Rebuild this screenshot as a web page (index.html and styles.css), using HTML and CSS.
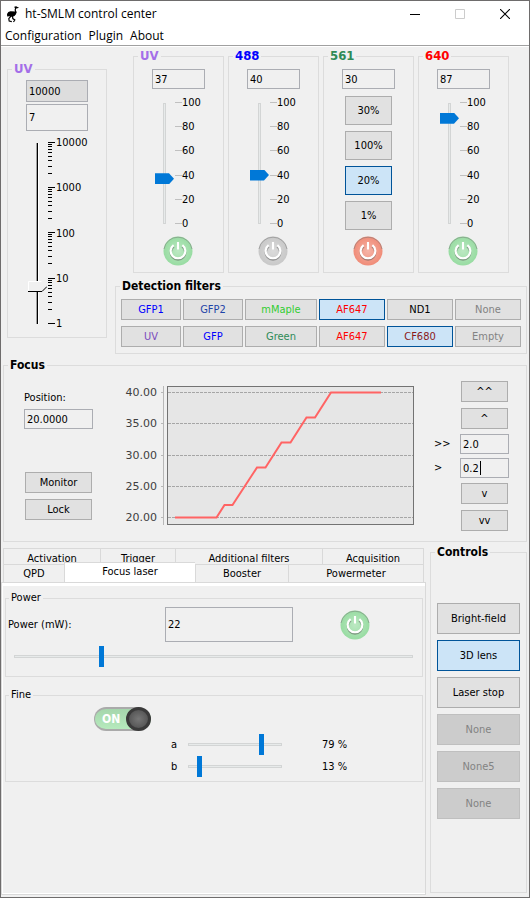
FILE: index.html
```
<!DOCTYPE html>
<html lang="en">
<head>
<meta charset="utf-8">
<title>ht-SMLM control center</title>
<meta name="viewport" content="width=device-width, initial-scale=1">
<link rel="stylesheet" href="styles.css">
</head>
<body>
<svg class="defs" aria-hidden="true">
  <defs>
    <symbol id="power" viewBox="0 0 30 30">
      <circle cx="15" cy="15" r="14.5" fill="currentColor"/>
      <circle cx="15" cy="15" r="14.5" fill="url(#shine)"/>
      <path d="M1 13A14.2 14.2 0 0 1 29 13" fill="none" stroke="#777" stroke-opacity=".5"/>
      <path d="M10.800 10.700A7.200 7.200 0 1 0 19.200 10.700" fill="none" stroke="#555" stroke-opacity=".5" stroke-width="2.2"/>
      <path d="M10.600 9.200A7.300 7.300 0 1 0 19.400 9.200M15 6V13.500" fill="none" stroke="#fff" stroke-width="2.1"/>
    </symbol>
    <radialGradient id="shine"><stop offset="0" stop-color="#fff" stop-opacity=".35"/><stop offset="1" stop-color="#fff" stop-opacity="0"/></radialGradient>
  </defs>
</svg>
<div class="window">
  <header class="titlebar">
    <svg class="logo" viewBox="0 0 18 20" aria-hidden="true"><path d="M10.500 3.400 12 2.800 13.500 3.600 11.600 4.200 11.200 6 12 9M8.500 12 8.800 14.600 10.800 16 9.500 18M7 12 4.800 14.600 5.200 17 7.800 17.600" fill="none" stroke="#000" stroke-width="1.200"/><path d="M3 10Q4 7 6.800 7.200L11.200 7.600 12.400 7.400Q12.800 10.500 10.500 12 8 13.500 5.500 12.300L3.200 12.600Z"/></svg>
    <h1>ht-SMLM control center</h1>
    <div class="winbuttons">
      <button type="button" aria-label="Minimize"><svg viewBox="0 0 10 10"><path d="M0 5.5H10" stroke="#000"/></svg></button>
      <button type="button" aria-label="Maximize" disabled><svg viewBox="0 0 10 10"><path d="M.5 .5H9.5V9.5H.5Z" fill="none" stroke="#ccc"/></svg></button>
      <button type="button" aria-label="Close"><svg viewBox="0 0 10 10"><path d="M0 0 10 10M10 0 0 10" stroke="#000" stroke-width="1.1"/></svg></button>
    </div>
  </header>
  <nav class="menubar"><button type="button">Configuration</button><button type="button">Plugin</button><button type="button">About</button></nav>

  <main>
    <div class="top">
      <fieldset class="pulse violet">
        <legend>UV</legend>
        <input class="max" type="text" value="10000" aria-label="UV maximum">
        <input class="now" type="text" value="7" aria-label="UV pulse">
        <div class="scale log">
          <input class="vslider classic" type="range" min="0" max="4" step="0.005" value="0.82" aria-label="UV pulse level">
          <svg class="logticks" viewBox="0 0 7 182" aria-hidden="true"><path d="M0 .5H7M0 2.5H4M0 4.5H4M0 7.5H4M0 10.5H4M0 14.5H4M0 18.5H4M0 24.5H4M0 31.5H4M0 45.5H7M0 47.5H4M0 49.5H4M0 52.5H4M0 55.5H4M0 59.5H4M0 63.5H4M0 69.5H4M0 76.5H4M0 90.5H7M0 92.5H4M0 94.5H4M0 97.5H4M0 100.5H4M0 104.5H4M0 108.5H4M0 114.5H4M0 121.5H4M0 136.5H7M0 138.5H4M0 140.5H4M0 143.5H4M0 146.5H4M0 150.5H4M0 154.5H4M0 160.5H4M0 167.5H4M0 181.5H7" stroke="#000"/></svg>
          <div class="marks"><span>10000</span><span>1000</span><span>100</span><span>10</span><span>1</span></div>
        </div>
      </fieldset>

      <div class="optics">
        <div class="lasers">
          <fieldset class="laser violet">
            <legend>UV</legend>
            <input type="text" value="37" aria-label="UV power">
            <div class="scale"><input class="vslider" type="range" value="37" aria-label="UV power level"><div class="marks ticked"><span>100</span><span>80</span><span>60</span><span>40</span><span>20</span><span>0</span></div></div>
            <button class="power on" type="button" aria-label="UV on"><svg><use href="#power"/></svg></button>
          </fieldset>
          <fieldset class="laser blue">
            <legend>488</legend>
            <input type="text" value="40" aria-label="488 power">
            <div class="scale"><input class="vslider" type="range" value="40" aria-label="488 power level"><div class="marks ticked"><span>100</span><span>80</span><span>60</span><span>40</span><span>20</span><span>0</span></div></div>
            <button class="power off" type="button" aria-label="488 off"><svg><use href="#power"/></svg></button>
          </fieldset>
          <fieldset class="laser green">
            <legend>561</legend>
            <input type="text" value="30" aria-label="561 power">
            <div class="presets"><button type="button">30%</button><button type="button">100%</button><button type="button" class="active">20%</button><button type="button">1%</button></div>
            <button class="power fault" type="button" aria-label="561 power switch"><svg><use href="#power"/></svg></button>
          </fieldset>
          <fieldset class="laser red">
            <legend>640</legend>
            <input type="text" value="87" aria-label="640 power">
            <div class="scale"><input class="vslider" type="range" value="87" aria-label="640 power level"><div class="marks ticked"><span>100</span><span>80</span><span>60</span><span>40</span><span>20</span><span>0</span></div></div>
            <button class="power on" type="button" aria-label="640 on"><svg><use href="#power"/></svg></button>
          </fieldset>
        </div>
        <fieldset class="filters">
          <legend>Detection filters</legend>
          <div class="filtergrid">
            <button type="button" class="c-blue">GFP1</button><button type="button" class="c-navy">GFP2</button><button type="button" class="c-lime">mMaple</button><button type="button" class="c-red active">AF647</button><button type="button">ND1</button><button type="button" class="c-gray">None</button>
            <button type="button" class="c-violet">UV</button><button type="button" class="c-blue">GFP</button><button type="button" class="c-green">Green</button><button type="button" class="c-red">AF647</button><button type="button" class="c-maroon active">CF680</button><button type="button" class="c-gray">Empty</button>
          </div>
        </fieldset>
      </div>
    </div>

    <fieldset class="focus">
      <legend>Focus</legend>
      <div class="focusbody">
        <div class="position">
          <label for="pos">Position:</label>
          <input id="pos" type="text" value="20.0000">
          <div class="posbuttons"><button type="button">Monitor</button><button type="button">Lock</button></div>
        </div>
        <svg class="chart" viewBox="0 0 296 146" role="img" aria-label="Focus position over time">
          <rect x="47.5" y="4.5" width="246" height="138" fill="#e6e6e6" stroke="#737373"/>
          <path d="M48 10.5H293M48 41.5H293M48 73.5H293M48 104.5H293M48 135.5H293" stroke="#a6a6a6" stroke-dasharray="3 1"/>
          <path d="M43.5 4V143M41 10.5H44M41 41.5H44M41 73.5H44M41 104.5H44M41 135.5H44" stroke="#b8b8b8"/>
          <path d="M55 135.5H96.5L104.5 123H112.5L137 85.500H145.5L161.500 60.500H170.500L186.500 35.500H195L211 10.500H261" fill="none" stroke="#ff6464" stroke-width="2"/>
          <g class="axis"><text x="37" y="14">40.00</text><text x="37" y="45">35.00</text><text x="37" y="77">30.00</text><text x="37" y="108">25.00</text><text x="37" y="139">20.00</text></g>
        </svg>
        <div class="steps">
          <div class="pair"><button type="button">^^</button><button type="button">^</button></div>
          <div class="stepfields">
            <label for="big">&gt;&gt;</label><input id="big" type="text" value="2.0">
            <label for="small">&gt;</label><div class="caretfield"><input id="small" type="text" value="0.2"><i class="caret"></i></div>
          </div>
          <div class="pair"><button type="button">v</button><button type="button">vv</button></div>
        </div>
      </div>
    </fieldset>

    <div class="bottom">
      <section class="tabs">
        <div class="tabrows" role="tablist">
          <div class="tabrow back"><button type="button" role="tab">Activation</button><button type="button" role="tab">Trigger</button><button type="button" role="tab">Additional filters</button><button type="button" role="tab">Acquisition</button></div>
          <div class="tabrow front"><button type="button" role="tab">QPD</button><button type="button" role="tab" aria-selected="true">Focus laser</button><button type="button" role="tab">Booster</button><button type="button" role="tab">Powermeter</button></div>
        </div>
        <div class="pane" role="tabpanel">
          <fieldset class="plain">
            <legend>Power</legend>
            <div class="powerrow">
              <label for="mw">Power (mW):</label>
              <input id="mw" type="text" value="22">
              <button class="power on" type="button" aria-label="Focus laser on"><svg><use href="#power"/></svg></button>
            </div>
            <input class="hslider wide" type="range" value="22" aria-label="Power level">
          </fieldset>
          <fieldset class="plain fine">
            <legend>Fine</legend>
            <label class="switch"><span>ON</span><input type="checkbox" checked></label>
            <div class="finerow"><label for="fa">a</label><input id="fa" class="hslider" type="range" value="79"><output for="fa">79 %</output></div>
            <div class="finerow"><label for="fb">b</label><input id="fb" class="hslider" type="range" value="13"><output for="fb">13 %</output></div>
          </fieldset>
        </div>
      </section>
      <fieldset class="controls">
        <legend>Controls</legend>
        <div class="controllist"><button type="button">Bright-field</button><button type="button" class="active">3D lens</button><button type="button">Laser stop</button><button type="button" disabled>None</button><button type="button" disabled>None5</button><button type="button" disabled>None</button></div>
      </fieldset>
    </div>
  </main>
</div>
</body>
</html>
```
FILE: styles.css
```
* { box-sizing: border-box; }
body { margin: 0; background: #f0f0f0; color: #000; font: 11px/14px Tahoma, "DejaVu Sans Condensed", "Noto Sans", sans-serif; }
button, input { font: inherit; color: inherit; margin: 0; min-width: 0; }
.defs { position: absolute; width: 0; height: 0; }
.window { min-height: 100vh; display: flex; flex-direction: column; border: 1px solid #6e6c6c; }

.titlebar { display: flex; align-items: center; height: 25px; background: #fff; padding-left: 3px; }
.logo { width: 18px; height: 20px; }
h1 { flex: 1; margin: 0 0 0 3px; font: 12px/16px "Segoe UI", "Open Sans", sans-serif; }
.winbuttons { display: flex; padding-right: 2px; }
.winbuttons button { width: 45px; height: 24px; padding: 0; border: 0; background: none; display: grid; place-items: center; }
.winbuttons svg { width: 10px; height: 10px; }
.menubar { display: flex; gap: 7px; height: 20px; padding: 0 4px; background: #fff; border-bottom: 1px solid #a0a0a0; box-shadow: 0 1px #fff; }
.menubar button { border: 0; padding: 0; background: none; font: 12px/16px "Segoe UI", "Open Sans", sans-serif; }

main { flex: 1; display: flex; flex-direction: column; padding: 3px 2px 2px 0; }
fieldset { margin: 0; min-width: 0; border: 1px solid #dcdcdc; padding: 0; }
legend { margin-left: 4px; padding: 0 2px; font-size: 12px; line-height: 14px; font-weight: bold; }
.pulse legend, .laser legend { margin-left: -14px; font-size: 13px; }
.violet legend { color: #a36ee8; }
.blue legend { color: #00f; }
.green legend { color: #2e8b57; }
.red legend { color: #f00; }
input[type="text"] { display: block; width: 100%; height: 20px; padding: 0 2px; border: 1px solid #abadb3; border-radius: 0; background: #f0f0f0; outline: 0; }

.presets button, .filters button, .focus button, .controls button { padding: 0; border: 1px solid #adadad; background: #e1e1e1; height: 21px; }
.presets button.active, .filters button.active, .controls button.active { background: #cce4f7; border-color: #005499; }
.controls button:disabled { background: #ccc; border-color: #bfbfbf; color: #838383; }

.top { display: flex; gap: 8px; padding-left: 6px; }
.pulse { width: 100px; margin: 13px 0 0; padding: 4px 18px 8px; align-self: flex-start; }
.pulse .max { height: 22px; background: #ddd; }
.pulse .now { height: 27px; margin-top: 2px; }
.pulse .log { height: 192px; margin-top: 6px; }
.optics { flex: 1; min-width: 0; }
.lasers { display: grid; grid-template-columns: repeat(4, minmax(0, 1fr)); gap: 4px; padding: 0 18px; }
.laser { display: flex; flex-direction: column; padding: 6px 18px; }
.laser .scale { height: 132px; margin: 8px 0 7px; padding-left: 3px; }
.laser .power { margin-right: 2px; }

.scale { display: flex; gap: 1px; padding-left: 2px; }
.vslider { writing-mode: vertical-lr; direction: rtl; appearance: none; width: 19px; height: 100%; flex: none; background: linear-gradient(#e7eaea, #e7eaea) center / 1px calc(100% - 13px) no-repeat, linear-gradient(#d3d5d5, #d3d5d5) center / 3px calc(100% - 11px) no-repeat; }
.vslider::-webkit-slider-runnable-track { width: 19px; background: none; }
.vslider::-webkit-slider-thumb { appearance: none; width: 19px; height: 11px; background: #0078d7; clip-path: polygon(0 0, 14px 0, 100% 50%, 14px 100%, 0 100%); }
.classic { background: linear-gradient(90deg, #a0a0a0 1px, #000 1px 2px, #fff 2px) center / 3px calc(100% - 11px) no-repeat; }
.classic::-webkit-slider-thumb { background: url("data:image/svg+xml,%3Csvg xmlns='http://www.w3.org/2000/svg' width='19' height='11'%3E%3Cpath d='M0 0H14L19 5 14 11H0Z' fill='%23f0f0f0'/%3E%3Cpath d='M.5 10V.5H13.5' fill='none' stroke='%23fff'/%3E%3Cpath d='M0 10.500H14L19 5.500' fill='none' stroke='%23000'/%3E%3C/svg%3E"); clip-path: none; }
.logticks { width: 7px; height: 182px; margin-top: 5px; flex: none; }
.marks { display: flex; flex-direction: column; justify-content: space-between; line-height: 11px; white-space: nowrap; }
.marks span { display: flex; align-items: center; }
.ticked span::before { content: ""; width: 7px; height: 1px; background: #c0c0c0; }

.power { display: block; width: 30px; height: 30px; padding: 0; border: 0; background: none; border-radius: 50%; align-self: center; }
.power svg { display: block; width: 30px; height: 30px; }
.power.on { color: #98dca2; }
.power.off { color: #c8c8c8; }
.power.fault { color: #f08c78; }
.presets { display: grid; gap: 6px; margin: 7px 3px 6px; }
.presets button { height: 29px; }

.filters { margin-top: 6px; padding: 6px 5px; }
.filters legend { margin-left: -1px; }
.filtergrid { display: grid; grid-template-columns: 60fr 60fr 72fr 66fr 66fr 66fr; gap: 6px 2px; }
.filters .c-blue { color: #00f; }
.filters .c-navy { color: #1f45a8; }
.filters .c-lime { color: #32cd32; }
.filters .c-red { color: #f00; }
.filters .c-gray { color: #838383; }
.filters .c-violet { color: #7b4bbd; }
.filters .c-green { color: #2e8b57; }
.filters .c-maroon { color: #8b1a1a; }

.focus { margin: 4px 0 0 2px; }
.focusbody { display: flex; padding: 9px 17px 10px 20px; }
.position { width: 69px; }
.position label { display: block; margin: 10px 0 4px; }
.posbuttons { display: grid; gap: 6px; margin: 43px 1px 0; }
.chart { flex: 1; min-width: 0; align-self: flex-start; margin: 1px 18px 0 27px; }
.axis { font: 11px "DejaVu Sans", sans-serif; fill: #404040; text-anchor: end; }
.steps { width: 75px; display: grid; gap: 5px; }
.pair { display: grid; gap: 6px; margin: 0 1px 0 27px; }
.stepfields { display: grid; grid-template-columns: 26px 49px; gap: 4px 0; align-items: center; }
.caretfield { position: relative; }
.caret { position: absolute; left: 20px; top: 3px; width: 1px; height: 14px; background: #000; }

.bottom { flex: 1; display: flex; gap: 4px; }
.tabs { flex: 1; min-width: 0; display: flex; flex-direction: column; padding-top: 6px; }
.tabrows { padding: 0 2px; }
.tabrow { display: grid; align-items: end; }
.tabrow button { height: 18px; padding: 0; border: solid #d9d9d9; border-width: 1px 0 0 1px; background: #f0f0f0; }
.tabrow button:last-child { border-right-width: 1px; }
.back { grid-template-columns: 97fr 75fr 147fr 102fr; height: 20px; }
.back button { height: 20px; }
.front { grid-template-columns: 61fr 131fr 93fr 136fr; height: 18px; margin-top: -4px; }
.front button[aria-selected] { height: 20px; margin: -2px 0 0; padding-bottom: 2px; background: #fff; position: relative; }
.pane { flex: 1; border: 1px solid #d9d9d9; box-shadow: inset 0 3px #fff, inset 1px -1px #fff; padding: 8px 2px 2px 3px; }
.plain legend { margin-left: 3px; font-size: 11px; font-weight: normal; }
.powerrow { display: grid; grid-template-columns: 157px 128px 1fr; align-items: center; padding: 2px 5px 4px 2px; }
.powerrow input[type="text"] { height: 35px; }
.powerrow .power { justify-self: center; }
.hslider { display: block; appearance: none; height: 21px; width: 100%; background: linear-gradient(#e7eaea, #e7eaea) center / calc(100% - 7px) 1px no-repeat, linear-gradient(#d3d5d5, #d3d5d5) center / calc(100% - 5px) 3px no-repeat; }
.hslider::-webkit-slider-thumb { appearance: none; width: 5px; height: 21px; background: #0078d7; }
.wide { width: calc(100% - 12px); margin: 0 7px 9px 5px; }
.fine { margin-top: 11px; padding-bottom: 4px; }
.switch { display: flex; align-items: center; justify-content: space-between; width: 57px; height: 24px; margin: 5px 0 3px 88px; padding-left: 7px; border-radius: 12px; color: #fff; font: bold 12px/14px "DejaVu Sans Condensed", sans-serif; background: linear-gradient(#a5d6ac, #b6eabd); border: solid #aaa; border-width: 2px 0 2px 1px; }
.switch input { appearance: none; width: 25px; height: 24px; margin: -2px 0; border-radius: 50%; border: 3px solid #3a3a3a; background: radial-gradient(#777, #4a4a4a); }
.finerow { display: grid; grid-template-columns: 14px 99px 1fr; align-items: center; padding-left: 165px; margin-bottom: 1px; }
.finerow output { padding-left: 38px; }
.fine .finerow:last-child { margin-bottom: 0; }

.controls { width: 97px; margin: 3px 0 2px; }
.controllist { display: grid; gap: 6px; padding: 44px 6px 0; }
.controls button { height: 31px; }
```
